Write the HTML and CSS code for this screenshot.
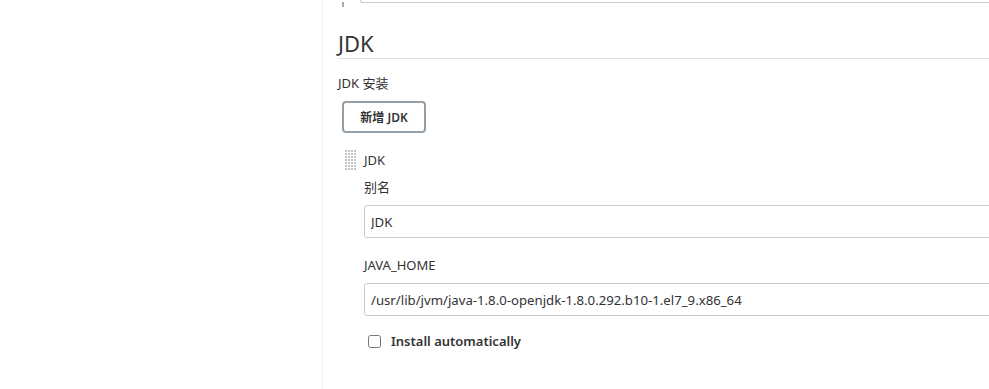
FILE: index.html
```html
<!DOCTYPE html>
<html lang="zh-CN">
<head>
    <meta charset="UTF-8">
    <meta name="viewport" content="width=device-width, initial-scale=1.0">
    <title>全局工具配置</title>
    <link rel="stylesheet" href="styles.css">
</head>
<body>
    <div class="sidebar"></div>
    <div class="main">
        <div class="content">
            <div class="prev">
                <span class="prev-handle"></span>
                <div class="prev-input"></div>
            </div>

            <h2 class="section-title">JDK</h2>
            <div class="label">JDK 安装</div>
            <button class="add-btn">新增 JDK</button>

            <div class="repeated">
                <div class="handle"></div>
                <div class="repeated-body">
                    <div class="item-title">JDK</div>
                    <div class="label">别名</div>
                    <input class="field" type="text" value="JDK">
                    <div class="label label-gap">JAVA_HOME</div>
                    <input class="field" type="text" value="/usr/lib/jvm/java-1.8.0-openjdk-1.8.0.292.b10-1.el7_9.x86_64">
                    <label class="check">
                        <input type="checkbox">
                        <span>Install automatically</span>
                    </label>
                </div>
            </div>
        </div>
    </div>
</body>
</html>
```

FILE: styles.css
```css
body {
    margin: 0;
    display: flex;
    height: 389px;
    overflow: hidden;
    background-color: white;
    color: #333;
    font-family: "Noto Sans", "Noto Sans CJK SC", sans-serif;
    font-size: 13px;
    line-height: 20px;
}
.sidebar {
    width: 322px;
    flex-shrink: 0;
    border-right: 1px solid #eef0f2;
}
.main {
    flex: 1;
    overflow: hidden;
    padding-left: 15px;
}
.content {
    width: calc(100% + 40px);
}
.prev {
    display: flex;
    height: 8px;
}
.prev-handle {
    width: 2px;
    height: 5px;
    margin: 2px 0 0 4px;
    background-color: #aaa;
}
.prev-input {
    flex: 1;
    height: 2px;
    margin-left: 16px;
    border: 1px solid #ccc;
    border-top: none;
    border-radius: 0 0 0 3px;
}
.section-title {
    margin: 20px 0 0;
    font-size: 22px;
    font-weight: normal;
    line-height: 30px;
    color: #333;
    border-bottom: 1px solid #e0e0e0;
}
.label {
    margin-top: 14px;
}
.add-btn {
    display: block;
    margin: 8px 0 0 4px;
    width: 84px;
    height: 32px;
    background-color: white;
    color: #333;
    border: 2px solid #959fa7;
    border-radius: 4px;
    font-family: inherit;
    font-size: 12px;
    font-weight: 600;
    cursor: pointer;
}
.repeated {
    display: flex;
    margin-top: 17px;
}
.handle {
    width: 11px;
    height: 20px;
    margin-left: 7px;
    margin-right: 8px;
    background-image:
        linear-gradient(90deg, transparent 2px, white 2px),
        linear-gradient(transparent 2px, white 2px);
    background-color: #c4c4c4;
    background-size: 3px 3px;
}
.repeated-body {
    flex: 1;
}
.repeated-body .label {
    margin-top: 7px;
}
.repeated-body .label-gap {
    margin-top: 17px;
}
.field {
    display: block;
    box-sizing: border-box;
    width: 100%;
    height: 33px;
    margin-top: 8px;
    padding: 0 6px;
    border: 1px solid #ccc;
    border-radius: 3px;
    color: #333;
    font-family: inherit;
    font-size: 13.2px;
}
.check {
    display: flex;
    align-items: center;
    margin-top: 15px;
    font-weight: 600;
}
.check input {
    width: 13px;
    height: 13px;
    margin: 0 10px 0 4px;
}
```
